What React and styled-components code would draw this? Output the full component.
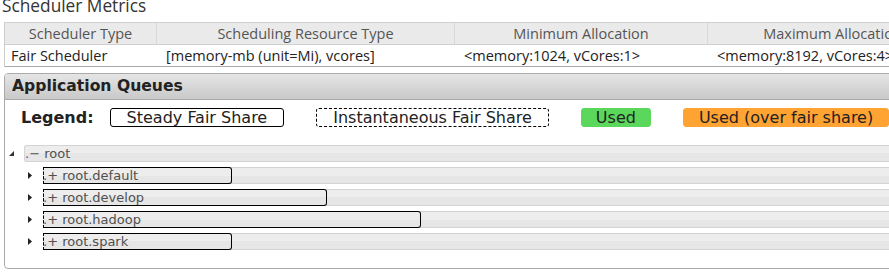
import React from "react";
import styled, { createGlobalStyle } from "styled-components";

const GlobalStyle = createGlobalStyle`
  html, body {
    margin: 0;
    padding: 0;
    background: #fff;
    overflow: hidden;
  }
  body {
    font-family: "Open Sans", "Liberation Sans", sans-serif;
  }
`;

const Page = styled.div`
  width: 996px;
  padding-left: 4px;
`;

const Title = styled.h3`
  margin: -4px 0 6px -2px;
  font-size: 17.3px;
  line-height: 20px;
  font-weight: 400;
  color: #333;
`;

const MetricsTable = styled.table`
  width: 996px;
  table-layout: fixed;
  border-collapse: separate;
  border-spacing: 0;
  border-left: 1px solid #ccc;
  font-size: 14.5px;

  th {
    padding: 0 9px;
    line-height: 21px;
    font-weight: 400;
    color: #555;
    text-align: center;
    white-space: nowrap;
    overflow: hidden;
    background: #eaeaea;
    border-top: 1px solid #cfcfcf;
    border-bottom: 1px solid #cfcfcf;
    border-right: 1px solid #d8d8d8;
  }
  td {
    padding: 0 9px;
    line-height: 21px;
    color: #222;
    white-space: nowrap;
    overflow: hidden;
    border-bottom: 1px solid #a9a9a9;
  }
  td:first-child {
    padding-left: 6px;
  }
`;

const Panel = styled.section`
  margin-top: 6px;
  border: 1px solid #aaa;
  border-radius: 4px;
  padding-bottom: 13px;
`;

const PanelHeader = styled.h3`
  margin: 0;
  padding: 0 7px;
  line-height: 25px;
  font-family: "DejaVu Sans", Verdana, sans-serif;
  font-size: 15.6px;
  font-weight: 700;
  color: #222;
  background: linear-gradient(#e5e5e5, #c9c9c9);
  border-bottom: 1px solid #aaa;
  border-radius: 3px 3px 0 0;
`;

const Legend = styled.ul`
  display: flex;
  align-items: center;
  margin: 8px 0 0;
  padding: 0 0 0 16px;
  list-style: none;
  font-family: "DejaVu Sans", Verdana, sans-serif;
  font-size: 16px;
  color: #222;
`;

const LegendLabel = styled.li`
  font-weight: 700;
  margin-right: 16px;
`;

const legendLooks = {
  steady: "border: 1px solid #000; background: #fff;",
  instant: "border: 1px dashed #000; background: #fff;",
  used: "border: 1px solid #5bd75b; background: #5bd75b;",
  over: "border: 1px solid #ffa333; background: #ffa333;",
};

const LegendBox = styled.li`
  padding: 0 ${(p) => p.$pad}px;
  margin-right: 32px;
  line-height: 17px;
  border-radius: 3px;
  white-space: nowrap;
  ${(p) => legendLooks[p.$kind]}
`;

const Tree = styled.ul`
  margin: 18px 11px 0 0;
  padding: 0 0 0 4px;
  list-style: none;
  font-family: "DejaVu Sans", Verdana, sans-serif;
  font-size: 13px;
`;

const Row = styled.li`
  display: flex;
  align-items: center;
  height: 17px;
  margin-bottom: 5px;
  padding-left: ${(p) => p.$level * 19}px;
`;

const Toggle = styled.span`
  display: flex;
  align-items: center;
  width: 15px;
  flex: none;
  height: 17px;
`;

const Bar = styled.div`
  position: relative;
  flex: 1;
  box-sizing: border-box;
  height: 17px;
  border-top: 1px solid #d3d3d3;
  border-bottom: 1px solid #d3d3d3;
  border-left: ${(p) => (p.$root ? "1px solid #d3d3d3" : "none")};
  border-radius: ${(p) => (p.$root ? "3px 0 0 3px" : "0")};
  background: linear-gradient(#ededed 50%, #e6e6e6 50%);
`;

const SteadyShare = styled.div`
  position: absolute;
  left: 0;
  top: -1px;
  bottom: -1px;
  box-sizing: border-box;
  border: 1px solid #000;
  border-left-style: dashed;
  border-radius: 0 3px 3px 0;
`;

const InstantShare = styled.div`
  position: absolute;
  left: 0;
  top: -1px;
  bottom: -1px;
  border-left: 1px dashed #000;
`;

const Label = styled.span`
  position: relative;
  display: block;
  line-height: 15px;
  color: #505050;
  white-space: nowrap;
`;

const Dot = styled.span`
  color: #2f5f9e;
`;

const Caret = ({ open }) =>
  open ? (
    <svg width="5" height="5" viewBox="0 0 5 5">
      <path d="M5 0 L5 5 L0 5 Z" fill="#333" />
    </svg>
  ) : (
    <svg width="4" height="7" viewBox="0 0 4 7">
      <path d="M0 0 L4 3.5 L0 7 Z" fill="#222" />
    </svg>
  );

const queues = [
  { name: "root.default", steady: 20 },
  { name: "root.develop", steady: 30 },
  { name: "root.hadoop", steady: 40 },
  { name: "root.spark", steady: 20 },
];

export default function App() {
  return (
    <Page>
      <GlobalStyle />
      <Title>Scheduler Metrics</Title>
      <MetricsTable>
        <colgroup>
          <col style={{ width: 152 }} />
          <col style={{ width: 298 }} />
          <col style={{ width: 253 }} />
          <col style={{ width: 250 }} />
          <col />
        </colgroup>
        <thead>
          <tr>
            <th>Scheduler Type</th>
            <th>Scheduling Resource Type</th>
            <th>Minimum Allocation</th>
            <th>Maximum Allocation</th>
            <th>Maximum Cluster Application Priority</th>
          </tr>
        </thead>
        <tbody>
          <tr>
            <td>Fair Scheduler</td>
            <td>[memory-mb (unit=Mi), vcores]</td>
            <td>&lt;memory:1024, vCores:1&gt;</td>
            <td>&lt;memory:8192, vCores:4&gt;</td>
            <td>0</td>
          </tr>
        </tbody>
      </MetricsTable>

      <Panel>
        <PanelHeader>Application Queues</PanelHeader>
        <Legend>
          <LegendLabel>Legend:</LegendLabel>
          <LegendBox $kind="steady" $pad={16}>Steady Fair Share</LegendBox>
          <LegendBox $kind="instant" $pad={16}>Instantaneous Fair Share</LegendBox>
          <LegendBox $kind="used" $pad={14}>Used</LegendBox>
          <LegendBox $kind="over" $pad={15}>Used (over fair share)</LegendBox>
        </Legend>
        <Tree>
          <Row $level={0}>
            <Toggle>
              <Caret open />
            </Toggle>
            <Bar $root>
              <Label>
                <Dot>.</Dot>− root
              </Label>
            </Bar>
          </Row>
          {queues.map((q) => (
            <Row $level={1} key={q.name}>
              <Toggle>
                <Caret />
              </Toggle>
              <Bar>
                <InstantShare />
                <SteadyShare style={{ width: `${q.steady}%` }} />
                <Label>
                  <Dot>.</Dot>+ {q.name}
                </Label>
              </Bar>
            </Row>
          ))}
        </Tree>
      </Panel>
    </Page>
  );
}
